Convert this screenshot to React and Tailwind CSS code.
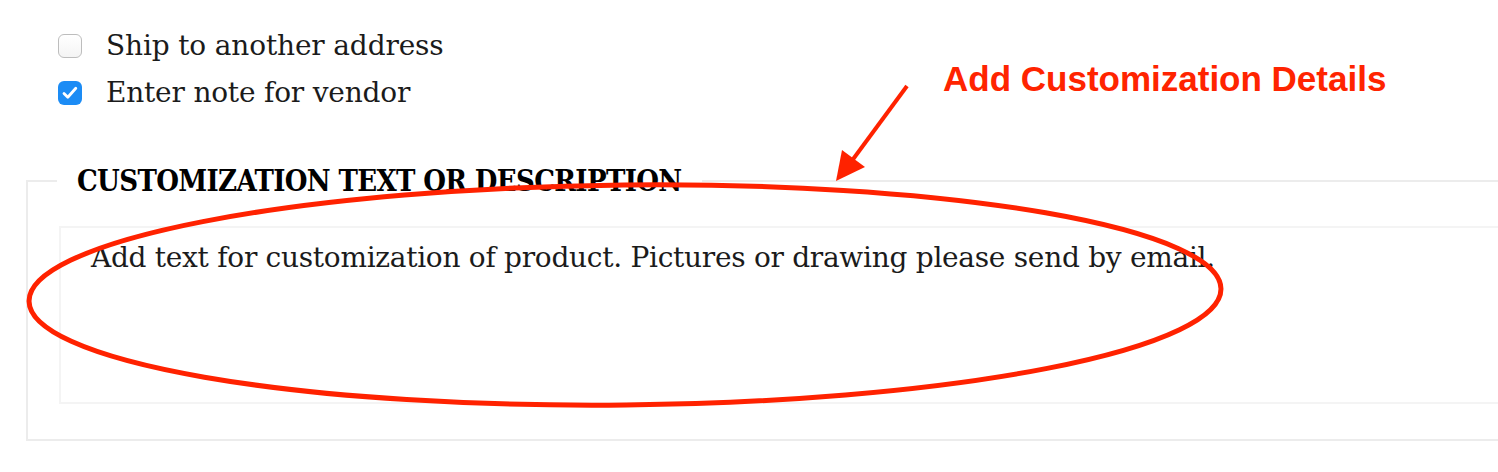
import React from 'react';

const slab = { fontFamily: '"DejaVu Serif", "Liberation Serif", serif' };
const slabCond = { fontFamily: '"DejaVu Serif Condensed", "DejaVu Serif", serif' };

function Box({ checked }) {
  return checked ? (
    <span className="flex h-6 w-6 items-center justify-center rounded-[6px] bg-[#1c8cf5]">
      <svg width="24" height="24" viewBox="0 0 24 24" fill="none">
        <path d="M6 12.5l3.8 3.8 8-9" stroke="white" strokeWidth="2.8" strokeLinecap="round" strokeLinejoin="round" />
      </svg>
    </span>
  ) : (
    <span className="h-6 w-6 rounded-[6px] border-[1.5px] border-[#bdbdbd] bg-gradient-to-b from-white to-[#f4f4f4]" />
  );
}

export default function App() {
  return (
    <div className="relative h-[472px] w-[1498px] overflow-hidden bg-white text-[#1b1b1b]">
      <div className="flex flex-col gap-[23px] pl-[58px] pt-[34px]">
        <label className="flex items-center gap-6">
          <Box checked={false} />
          <span className="text-[28px] leading-6 tracking-[-0.15px]" style={slab}>Ship to another address</span>
        </label>
        <label className="flex items-center gap-6">
          <Box checked />
          <span className="text-[28px] leading-6 tracking-[-0.2px]" style={slab}>Enter note for vendor</span>
        </label>
      </div>

      <fieldset className="ml-[26px] mt-[62px] h-[274px] w-[1500px] border-2 border-[#ececec] p-0">
        <legend className="ml-[29px] px-[20px] text-[29px] font-bold leading-7 tracking-[-0.65px] text-black font-stretch-condensed" style={slabCond}>
          CUSTOMIZATION TEXT OR DESCRIPTION
        </legend>
        <div className="ml-[31px] mt-[31px] h-[178px] border-2 border-[#f4f4f4] px-[30px] pt-[14px] text-[28px] leading-8 tracking-[-0.28px]" style={slab}>
          Add text for customization of product. Pictures or drawing please send by email.
        </div>
      </fieldset>

      <div
        className="absolute left-[943px] top-[59px] text-[35px] font-bold leading-10 text-[#ff2400]"
        style={{ fontFamily: '"Liberation Sans", Arial, sans-serif' }}
      >
        Add Customization Details
      </div>

      <svg className="pointer-events-none absolute inset-0" width="1498" height="472" viewBox="0 0 1498 472">
        <ellipse cx="625" cy="295" rx="596" ry="110" fill="none" stroke="#ff2200" strokeWidth="5" transform="rotate(-0.6 625 295)" />
        <line x1="907" y1="86" x2="851" y2="162" stroke="#ff2200" strokeWidth="4" />
        <polygon points="836,181 842,150 865,167" fill="#ff2200" />
      </svg>
    </div>
  );
}
